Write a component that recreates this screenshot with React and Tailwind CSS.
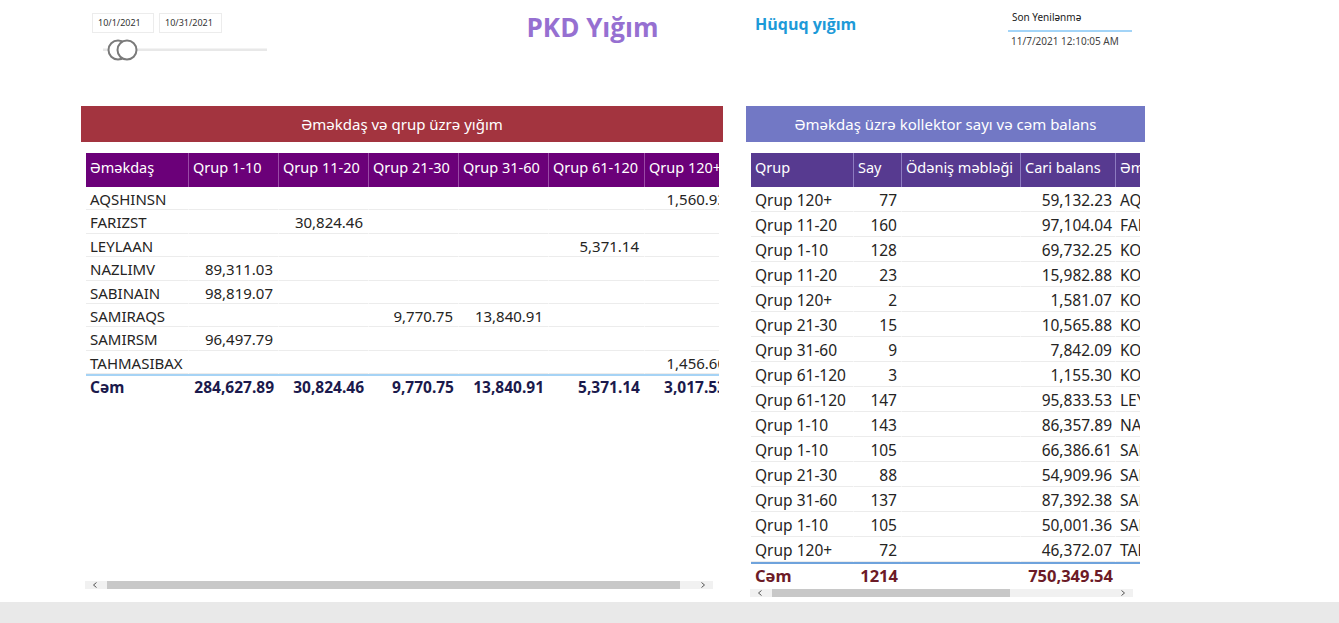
const FONT = { fontFamily: '"Noto Sans", "Open Sans", sans-serif' };

const leftCols = [103, 90, 90, 90, 90, 96, 86];
const leftHead = ["Əməkdaş", "Qrup 1-10", "Qrup 11-20", "Qrup 21-30", "Qrup 31-60", "Qrup 61-120", "Qrup 120+"];
const leftRows = [
  ["AQSHINSN", "", "", "", "", "", "1,560.93"],
  ["FARIZST", "", "30,824.46", "", "", "", ""],
  ["LEYLAAN", "", "", "", "", "5,371.14", ""],
  ["NAZLIMV", "89,311.03", "", "", "", "", ""],
  ["SABINAIN", "98,819.07", "", "", "", "", ""],
  ["SAMIRAQS", "", "", "9,770.75", "13,840.91", "", ""],
  ["SAMIRSM", "96,497.79", "", "", "", "", ""],
  ["TAHMASIBAX", "", "", "", "", "", "1,456.60"],
];
const leftTotal = ["Cəm", "284,627.89", "30,824.46", "9,770.75", "13,840.91", "5,371.14", "3,017.53"];

const rightCols = [103, 48, 119, 95, 80];
const rightHead = ["Qrup", "Say", "Ödəniş məbləği", "Cari balans", "Əməkdaş"];
const rightRows = [
  ["Qrup 120+", "77", "59,132.23", "AQSHINSN"],
  ["Qrup 11-20", "160", "97,104.04", "FARIZST"],
  ["Qrup 1-10", "128", "69,732.25", "KOLLEKTOR"],
  ["Qrup 11-20", "23", "15,982.88", "KOLLEKTOR"],
  ["Qrup 120+", "2", "1,581.07", "KOLLEKTOR"],
  ["Qrup 21-30", "15", "10,565.88", "KOLLEKTOR"],
  ["Qrup 31-60", "9", "7,842.09", "KOLLEKTOR"],
  ["Qrup 61-120", "3", "1,155.30", "KOLLEKTOR"],
  ["Qrup 61-120", "147", "95,833.53", "LEYLAAN"],
  ["Qrup 1-10", "143", "86,357.89", "NAZLIMV"],
  ["Qrup 1-10", "105", "66,386.61", "SABINAIN"],
  ["Qrup 21-30", "88", "54,909.96", "SAMIRAQS"],
  ["Qrup 31-60", "137", "87,392.38", "SAMIRAQS"],
  ["Qrup 1-10", "105", "50,001.36", "SAMIRSM"],
  ["Qrup 120+", "72", "46,372.07", "TAHMASIBAX"],
];

function Scrollbar({ thumbLeft, thumbWidth }) {
  return (
    <div className="flex h-[8px] items-center bg-[#f1f1f1] text-[#666]">
      <div className="flex w-[20px] shrink-0 items-center justify-center">
        <svg width="6" height="6" viewBox="0 0 6 6"><path d="M4.5 0.5 L1.5 3 L4.5 5.5" fill="none" stroke="#555" strokeWidth="1" /></svg>
      </div>
      <div className="relative h-full flex-1">
        <div className="h-full bg-[#c8c8c8]" style={{ marginLeft: thumbLeft, width: thumbWidth }} />
      </div>
      <div className="flex w-[20px] shrink-0 items-center justify-center">
        <svg width="6" height="6" viewBox="0 0 6 6"><path d="M1.5 0.5 L4.5 3 L1.5 5.5" fill="none" stroke="#555" strokeWidth="1" /></svg>
      </div>
    </div>
  );
}

export default function App() {
  return (
    <div className="flex h-[623px] w-[1339px] flex-col bg-white text-[#252423]" style={FONT}>
      <div className="h-[602px] shrink-0">
        {/* top bar */}
        <div className="grid h-[106px] grid-cols-[480px_225px_303px_331px]">
          <div className="pl-[92px] pt-[13px]">
            <div className="flex gap-[5px]">
              <div className="flex h-[20px] w-[62px] items-center border border-[#ececec] pl-[5px] text-[9px] text-[#333]">10/1/2021</div>
              <div className="flex h-[20px] w-[63px] items-center border border-[#ececec] pl-[5px] text-[9px] text-[#333]">10/31/2021</div>
            </div>
            <svg width="180" height="26" viewBox="0 0 180 26" className="mt-[4px]">
              <rect x="11" y="11.5" width="164" height="2.5" fill="#e8e8e8" />
              <circle cx="26" cy="13" r="9.5" fill="#fff" stroke="#7a7a7a" strokeWidth="2" />
              <circle cx="35" cy="13" r="9.5" fill="#fff" stroke="#7a7a7a" strokeWidth="2" />
            </svg>
          </div>
          <div className="flex justify-center pt-[9px]">
            <span className="text-[26px] font-bold leading-[36px] text-[#9670d1]" style={{ fontFamily: '"Open Sans", sans-serif' }}>PKD Yığım</span>
          </div>
          <div className="pl-[50px] pt-[12px]">
            <span className="text-[16px] font-bold leading-[24px] text-[#1d9ad8]" style={{ fontFamily: '"Open Sans", sans-serif' }}>Hüquq yığım</span>
          </div>
          <div className="pt-[9px]">
            <div className="w-[124px]">
              <div className="border-b-2 border-[#a3d4f7] pb-[5px] pl-[4px] text-[10px] leading-[16px] text-[#222]">Son Yenilənmə</div>
              <div className="pl-[3px] pt-[1px] text-[10px] leading-[16px] text-[#444]">11/7/2021 12:10:05 AM</div>
            </div>
          </div>
        </div>

        {/* panels */}
        <div className="flex">
          {/* left panel */}
          <div className="ml-[81px] w-[642px]">
            <div className="flex h-[36px] items-center justify-center bg-[#a3343f] text-[15px] text-white">Əməkdaş və qrup üzrə yığım</div>
            <div className="ml-[5px] mt-[11px] w-[633px] overflow-hidden">
              <div className="w-[700px]">
                <div className="flex h-[34px] bg-[#6b0079] text-[14.5px] text-white">
                  {leftHead.map((h, i) => (
                    <div key={i} className="shrink-0 whitespace-nowrap border-r border-[#9a4aa6] pl-[4px] pt-[4px] leading-[20px]" style={{ width: leftCols[i] }}>{h}</div>
                  ))}
                </div>
                {leftRows.map((r, ri) => (
                  <div key={ri} className="flex h-[23.4px] text-[15px]">
                    {r.map((c, i) => (
                      <div key={i} className={`shrink-0 whitespace-nowrap border-b border-[#ececec] pt-[2px] leading-[21px] ${i === 0 ? "pl-[4px] text-left" : "pr-[5px] text-right"} ${i < r.length - 1 ? "border-r border-r-white" : ""}`} style={{ width: leftCols[i] }}>{c}</div>
                    ))}
                  </div>
                ))}
                <div className="flex h-[24px] border-t-2 border-[#a6d3f5] text-[15.5px] font-bold text-[#1b1a4c]">
                  {leftTotal.map((c, i) => (
                    <div key={i} className={`shrink-0 whitespace-nowrap leading-[23px] ${i === 0 ? "pl-[4px] text-left" : "pr-[5px] text-right"}`} style={{ width: leftCols[i] }}>{c}</div>
                  ))}
                </div>
              </div>
            </div>
            <div className="ml-[4px] mt-[183px] w-[628px]">
              <Scrollbar thumbLeft={2} thumbWidth={573} />
            </div>
          </div>

          {/* right panel */}
          <div className="ml-[23px] w-[399px]">
            <div className="flex h-[36px] items-center justify-center bg-[#7278c5] text-[15px] text-white">Əməkdaş üzrə kollektor sayı və cəm balans</div>
            <div className="ml-[5px] mt-[11px] w-[389px] overflow-hidden">
              <div className="w-[460px]">
                <div className="flex h-[34px] bg-[#573a90] text-[14.5px] text-white">
                  {rightHead.map((h, i) => (
                    <div key={i} className="shrink-0 whitespace-nowrap border-r border-[#8d7bc0] pl-[4px] pt-[4px] leading-[20px]" style={{ width: rightCols[i] }}>{h}</div>
                  ))}
                </div>
                {rightRows.map((r, ri) => (
                  <div key={ri} className="flex h-[25px] text-[15.5px]">
                    <div className="shrink-0 whitespace-nowrap border-b border-r border-[#ececec] border-r-white pl-[4px] pt-[2px] leading-[22px]" style={{ width: rightCols[0] }}>{r[0]}</div>
                    <div className="shrink-0 whitespace-nowrap border-b border-r border-[#ececec] border-r-white pr-[4px] pt-[2px] text-right leading-[22px]" style={{ width: rightCols[1] }}>{r[1]}</div>
                    <div className="shrink-0 border-b border-r border-[#ececec] border-r-white" style={{ width: rightCols[2] }} />
                    <div className="shrink-0 whitespace-nowrap border-b border-r border-[#ececec] border-r-white pr-[3px] pt-[2px] text-right leading-[22px]" style={{ width: rightCols[3] }}>{r[2]}</div>
                    <div className="shrink-0 whitespace-nowrap border-b border-[#ececec] pl-[4px] pt-[2px] leading-[22px]" style={{ width: rightCols[4] }}>{r[3]}</div>
                  </div>
                ))}
                <div className="flex h-[25px] border-t-2 border-[#6fa3dc] text-[16.5px] font-bold text-[#6c1b27]">
                  <div className="shrink-0 pl-[4px] pt-[1px] leading-[22px]" style={{ width: rightCols[0] }}>Cəm</div>
                  <div className="shrink-0 pr-[4px] pt-[1px] text-right leading-[22px]" style={{ width: rightCols[1] }}>1214</div>
                  <div className="shrink-0" style={{ width: rightCols[2] }} />
                  <div className="shrink-0 whitespace-nowrap pr-[3px] pt-[1px] text-right leading-[22px]" style={{ width: rightCols[3] }}>750,349.54</div>
                  <div className="shrink-0" style={{ width: rightCols[4] }} />
                </div>
              </div>
            </div>
            <div className="ml-[4px] mt-[2px] w-[383px]">
              <Scrollbar thumbLeft={2} thumbWidth={238} />
            </div>
          </div>
        </div>
      </div>
      <div className="flex-1 bg-[#e9e9e9]" />
    </div>
  );
}
